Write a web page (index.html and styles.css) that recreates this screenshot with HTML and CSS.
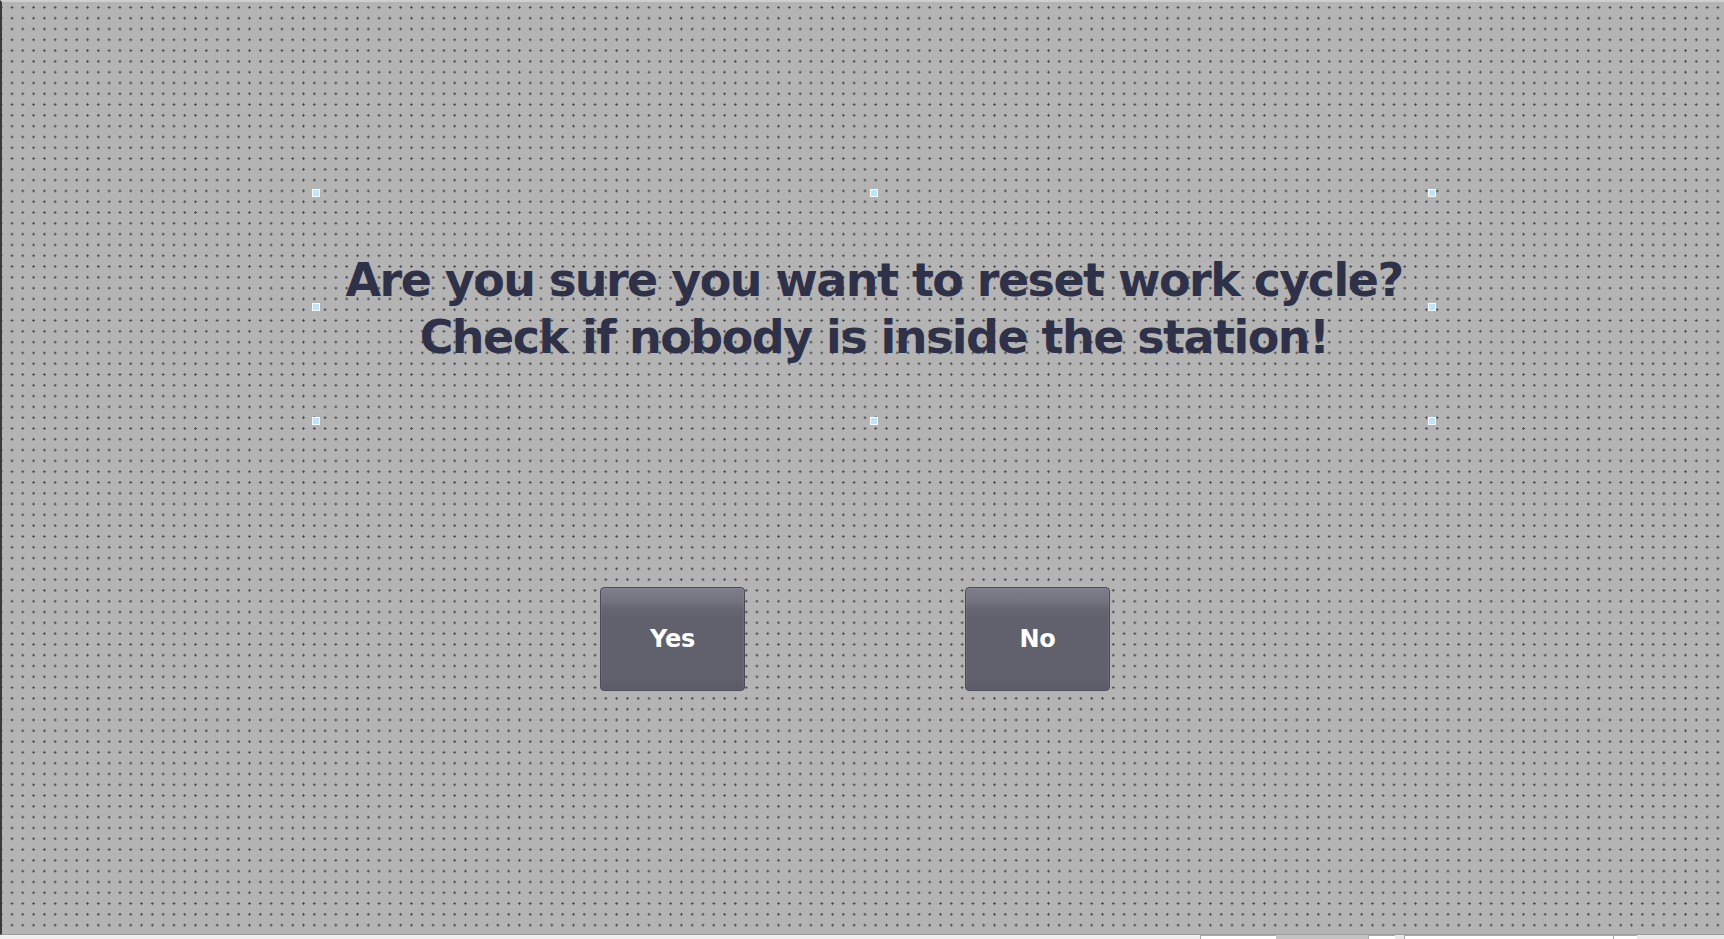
FILE: index.html
```html
<!DOCTYPE html>
<html>
<head>
<meta charset="utf-8">
<link rel="stylesheet" href="styles.css">
</head>
<body>
<div class="screen">
  <div class="canvas">
    <div class="textbox">
      <p class="msg">Are you sure you want to reset work cycle?<br>Check if nobody is inside the station!</p>
      <span class="h h-tl"></span><span class="h h-tc"></span><span class="h h-tr"></span>
      <span class="h h-ml"></span><span class="h h-mr"></span>
      <span class="h h-bl"></span><span class="h h-bc"></span><span class="h h-br"></span>
    </div>
    <div class="buttons">
      <div class="btn">Yes</div>
      <div class="btn">No</div>
    </div>
  </div>
  <div class="statusbar">
    <div class="seg seg-fill"></div>
    <div class="seg seg-white w76"></div>
    <div class="seg seg-grey w92"></div>
    <div class="seg seg-white w27"></div>
    <div class="seg seg-light w9"></div>
    <div class="seg seg-white w209"></div>
    <div class="seg seg-white w24"></div>
    <div class="seg seg-light w87"></div>
  </div>
</div>
</body>
</html>
```

FILE: styles.css
```css
html, body {
  margin: 0;
  padding: 0;
}
body {
  width: 1724px;
  height: 939px;
  overflow: hidden;
  background: #f0f0f0;
  font-family: "DejaVu Sans", sans-serif;
}
.screen {
  display: flex;
  flex-direction: column;
  width: 1724px;
  height: 939px;
}
.canvas {
  flex: 0 0 932px;
  border-top: 2px solid #cfcfcf;
  border-left: 2px solid #3a3a3a;
  border-bottom: 1px solid #9c9c9c;
  background-color: #b4b4b4;
  background-image: radial-gradient(circle, #454545 0, #454545 0.9px, rgba(69,69,69,0) 1.4px);
  background-size: 10.8px 10.8px;
  background-position: 4.6px 0px;
  display: flex;
  flex-direction: column;
}
.textbox {
  position: relative;
  margin-top: 191px;
  margin-left: 314px;
  width: 1116px;
  height: 228px;
  display: flex;
  align-items: center;
  justify-content: center;
}
.msg {
  margin: 4px 0 0 0;
  text-align: center;
  color: #2f3149;
  font-family: "DejaVu Sans", sans-serif;
  font-weight: bold;
  font-size: 46px;
  line-height: 57px;
  letter-spacing: -1.55px;
  white-space: nowrap;
}
.h {
  position: absolute;
  width: 6px;
  height: 6px;
  background: #bfe3f9;
  border: 1px solid #f4fbff;
  box-sizing: content-box;
}
.h-tl { left: -4px; top: -4px; }
.h-tc { left: 554px; top: -4px; }
.h-tr { right: -4px; top: -4px; }
.h-ml { left: -4px; top: 110px; }
.h-mr { right: -4px; top: 110px; }
.h-bl { left: -4px; bottom: -4px; }
.h-bc { left: 554px; bottom: -4px; }
.h-br { right: -4px; bottom: -4px; }
.buttons {
  display: flex;
  gap: 220px;
  margin-top: 166px;
  padding-left: 598px;
}
.btn {
  width: 143px;
  height: 102px;
  border: 1px solid #4a4b57;
  border-radius: 4px;
  background: linear-gradient(to bottom, #7d7e89 0px, #72737e 14px, #666773 20px, #60616c 30px, #60616c 90px, #5a5b66 102px);
  box-shadow: inset 0 0 0 1px rgba(255,255,255,0.06);
  color: #ffffff;
  font-family: "DejaVu Sans", sans-serif;
  font-weight: bold;
  font-size: 24px;
  letter-spacing: -0.3px;
  display: flex;
  align-items: center;
  justify-content: center;
}
.statusbar {
  flex: 1;
  display: flex;
  background: #f0f0f0;
}
.seg {
  height: 100%;
  box-sizing: border-box;
}
.seg-fill { flex: 1; }
.seg-white { background: #ffffff; border-left: 1px solid #a8a8a8; border-top: 1px solid #a8a8a8; }
.seg-grey { background: #c4c4c4; }
.seg-light { background: #e8e8e8; }
.w76 { width: 76px; }
.w92 { width: 92px; }
.w27 { width: 27px; }
.w9 { width: 9px; }
.w209 { width: 209px; }
.w24 { width: 24px; }
.w87 { width: 87px; }
```
